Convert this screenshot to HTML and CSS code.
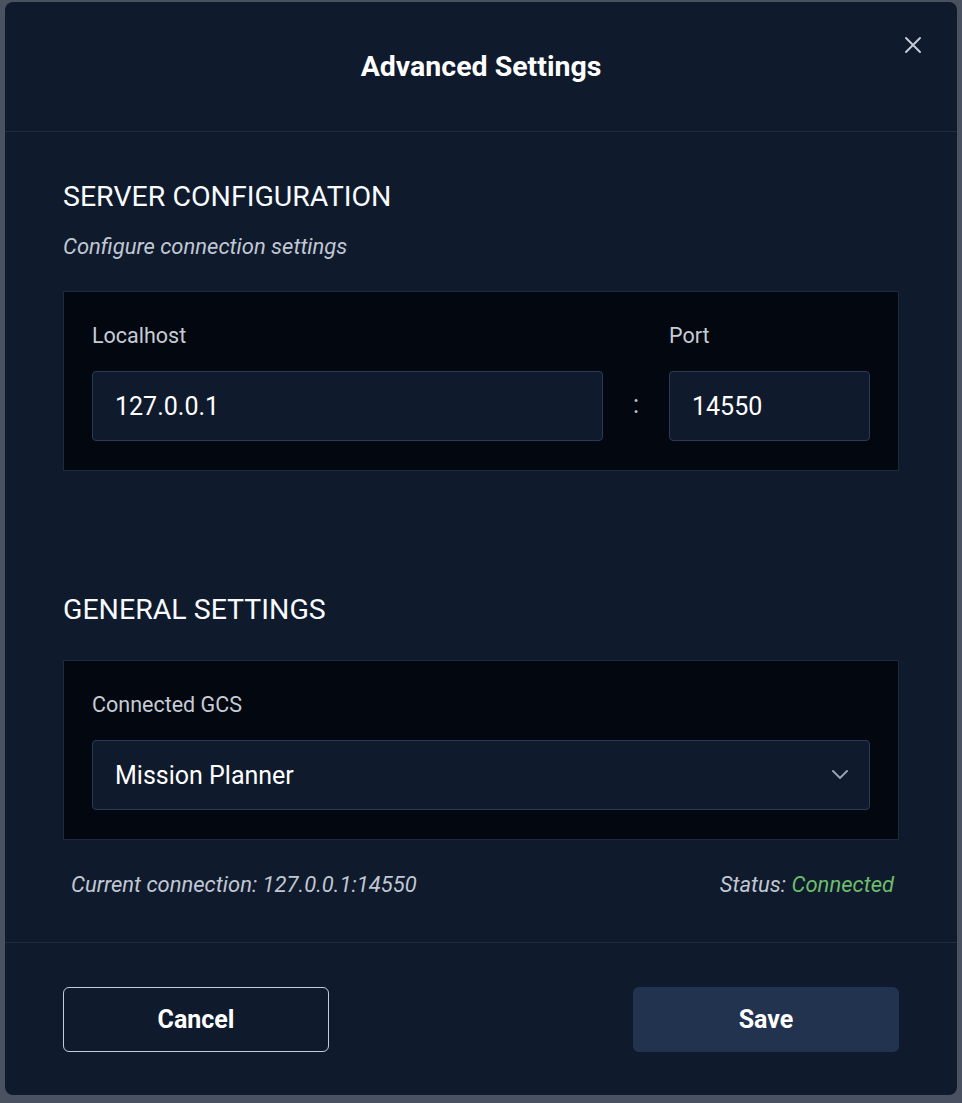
FILE: index.html
```html
<!DOCTYPE html>
<html lang="en">
<head>
  <meta charset="UTF-8">
  <title>Advanced Settings</title>
  <link rel="stylesheet" href="styles.css">
</head>
<body>

  <div class="dialog">
    <header class="dialog-header">
      <h1>Advanced Settings</h1>
      <button class="close" aria-label="Close">
        <svg width="18" height="18" viewBox="0 0 18 18">
          <path d="M2 2 L16 16 M16 2 L2 16" stroke="#c3cad6" stroke-width="2" stroke-linecap="round" fill="none"/>
        </svg>
      </button>
    </header>

    <div class="dialog-body">
      <section class="section">
        <h2>SERVER CONFIGURATION</h2>
        <p class="hint">Configure connection settings</p>
        <div class="panel server-grid">
          <label class="field-label">Localhost</label>
          <span></span>
          <label class="field-label">Port</label>
          <div class="input">127.0.0.1</div>
          <span class="colon">:</span>
          <div class="input">14550</div>
        </div>
      </section>

      <section class="section general">
        <h2>GENERAL SETTINGS</h2>
        <div class="panel">
          <label class="field-label">Connected GCS</label>
          <div class="input select">
            <span>Mission Planner</span>
            <svg width="18" height="12" viewBox="0 0 18 12">
              <path d="M2 2 L9 9 L16 2" stroke="#94a0b4" stroke-width="2" fill="none" stroke-linecap="round" stroke-linejoin="round"/>
            </svg>
          </div>
        </div>
        <div class="status-row">
          <span>Current connection: 127.0.0.1:14550</span>
          <span>Status: <span class="ok">Connected</span></span>
        </div>
      </section>
    </div>

    <footer class="dialog-footer">
      <button class="btn btn-outline">Cancel</button>
      <button class="btn btn-primary">Save</button>
    </footer>
  </div>

</body>
</html>
```

FILE: styles.css
```css
* {
  box-sizing: border-box;
}

body {
  margin: 0;
  padding: 2px 5px 8px;
  background: #4a5261;
  font-family: Roboto, "Liberation Sans", Arial, sans-serif;
  color: #f1f5f9;
}

.dialog {
  background: #0f1a2d;
  border-radius: 8px;
  height: 1093px;
  display: flex;
  flex-direction: column;
}

.dialog-header {
  position: relative;
  height: 130px;
  border-bottom: 1px solid #1f2b3f;
  display: flex;
  align-items: center;
  justify-content: center;
}

.dialog-header h1 {
  margin: 0;
  font-size: 28.5px;
  font-weight: 700;
  line-height: 32px;
  color: #ffffff;
}

.close {
  position: absolute;
  top: 34px;
  right: 35px;
  background: none;
  border: none;
  padding: 0;
  cursor: pointer;
}

.dialog-body {
  padding: 49px 58px 0 58px;
  flex-grow: 1;
}

.section h2 {
  margin: 0;
  font-size: 28.5px;
  font-weight: 400;
  line-height: 32px;
  color: #f8fafc;
}

.hint {
  margin: 21px 0 31px;
  font-size: 22px;
  line-height: 26px;
  font-style: italic;
  color: #c0c7d2;
}

.panel {
  background: #03070f;
  border: 1px solid #1c2a40;
  padding: 29px 28px 29px;
}

.server-grid {
  display: grid;
  grid-template-columns: 1fr 66px 201px;
  align-items: center;
}

.field-label {
  display: block;
  font-size: 21.5px;
  line-height: 26px;
  color: #c6ccd6;
  padding-top: 2px;
  margin-bottom: 22px;
  align-self: start;
}

.input {
  height: 70px;
  background: #0f1a2d;
  border: 1px solid #2a3a54;
  border-radius: 4px;
  padding: 0 22px;
  display: flex;
  align-items: center;
  font-size: 25px;
  color: #ffffff;
}

.colon {
  text-align: center;
  font-size: 25px;
  color: #c0c7d2;
  padding-bottom: 4px;
}

.select {
  justify-content: space-between;
  padding-right: 20px;
}

.general {
  margin-top: 123px;
}

.general h2 {
  margin-bottom: 34px;
}

.status-row {
  display: flex;
  justify-content: space-between;
  padding: 32px 5px 0 8px;
  font-size: 22px;
  line-height: 26px;
  font-style: italic;
  color: #c0c7d2;
}

.ok {
  color: #6cbd6a;
}

.dialog-footer {
  border-top: 1px solid #1f2b3f;
  padding: 44px 58px 43px;
  display: flex;
  justify-content: space-between;
}

.btn {
  width: 266px;
  height: 65px;
  border-radius: 6px;
  font-family: inherit;
  font-size: 25px;
  font-weight: 700;
  color: #ffffff;
  cursor: pointer;
}

.btn-outline {
  background: transparent;
  border: 1px solid #c6ccd6;
}

.btn-primary {
  background: #21334f;
  border: none;
}
```
